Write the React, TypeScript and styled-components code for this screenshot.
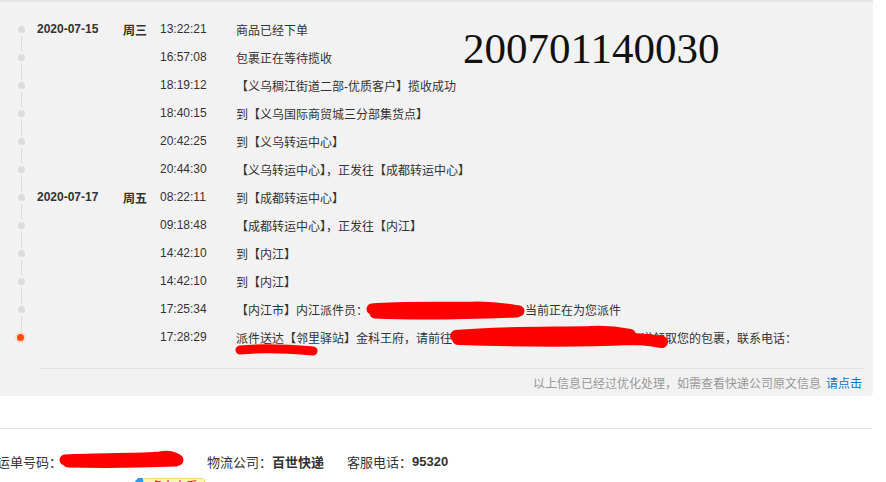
import React from "react"
import styled, { createGlobalStyle } from "styled-components"

const GlobalStyle = createGlobalStyle`
  html, body {
    margin: 0;
    padding: 0;
    background: #fff;
    overflow: hidden;
  }
  body {
    font-family: "Liberation Sans", "Noto Sans CJK SC", sans-serif;
    color: #333;
  }
`

const Page = styled.div`
  position: relative;
  width: 886px;
  height: 482px;
`

const Panel = styled.section`
  width: 873px;
  background: #f2f2f2;
  border-top: 2px solid #e6e6e6;
  border-bottom-right-radius: 4px;
  padding-top: 13px;
  box-sizing: border-box;
`

const Row = styled.div`
  display: grid;
  grid-template-columns: 37px 86px 37px 76px 1fr;
  height: 28px;
  align-items: center;
  font-size: 12px;
  white-space: nowrap;
`

const Gutter = styled.div<{ $first?: boolean; $last?: boolean; $current?: boolean }>`
  position: relative;
  height: 28px;
  &::before {
    content: "";
    position: absolute;
    left: 21px;
    width: 1px;
    top: ${(p) => (p.$first ? "7px" : "0")};
    bottom: ${(p) => (p.$last ? "14px" : "0")};
    background: #dcdcdc;
  }
  &::after {
    content: "";
    position: absolute;
    left: ${(p) => (p.$current ? "17px" : "18px")};
    top: 11px;
    width: 7px;
    height: 7px;
    border-radius: 50%;
    background: ${(p) => (p.$current ? "#ff4a0a" : "#dcdcdc")};
    box-shadow: 0 0 0 ${(p) => (p.$current ? "2px #fcdcd0" : "3px #f2f2f2")};
  }
`

const DateCell = styled.span`
  font-weight: bold;
  color: #333;
`

const WeekCell = styled.span`
  font-weight: bold;
  color: #333;
`

const TimeCell = styled.span`
  color: #333;
`

const TextCell = styled.span`
  color: #333;
`

const Redacted = styled.span<{ $w: number }>`
  position: relative;
  display: inline-block;
  width: ${(p) => p.$w}px;
  height: 12px;
  vertical-align: middle;
`

const Marked = styled.span`
  position: relative;
  display: inline-block;
`

const Ink = styled.svg<{ $l: number; $t: number }>`
  position: absolute;
  left: ${(p) => p.$l}px;
  top: ${(p) => p.$t}px;
  overflow: visible;
`

const Divider = styled.div`
  margin: 17px 10px 0 40px;
  height: 1px;
  background: #e2e2e2;
`

const Note = styled.div`
  height: 27px;
  display: flex;
  align-items: center;
  justify-content: flex-end;
  padding-right: 11px;
  font-size: 12px;
  color: #999;
  gap: 5px;
`

const NoteLink = styled.a`
  color: #0a72c8;
  text-decoration: none;
  font-size: 12px;
`

const Rule = styled.div`
  margin-top: 32px;
  width: 872px;
  height: 1px;
  background: #e4e4e4;
`

const InfoRow = styled.div`
  display: flex;
  align-items: center;
  height: 26px;
  margin: 19px 0 0 -3px;
  font-size: 13px;
  color: #333;
  white-space: nowrap;
`

const InfoItem = styled.span<{ $gap?: number }>`
  margin-left: ${(p) => p.$gap ?? 0}px;
  display: inline-flex;
  align-items: center;
`

const Strong = styled.b`
  font-weight: bold;
`

const Tip = styled.div`
  display: flex;
  align-items: flex-start;
  margin: 4px 0 0 133px;
`

const TipArrow = styled.span`
  width: 0;
  height: 0;
  border-left: 5px solid transparent;
  border-right: 5px solid #2b9bf0;
  border-bottom: 6px solid #2b9bf0;
`

const TipBadge = styled.span`
  background: #fff3b8;
  border: 1px solid #f3d67a;
  border-radius: 3px;
  padding: 0 6px;
  font-size: 12px;
  line-height: 16px;
  color: #d40000;
`

const BigNumber = styled.div`
  position: absolute;
  left: 463px;
  top: 27px;
  font-family: "Liberation Serif", serif;
  font-size: 43px;
  line-height: 1;
  color: #111;
`

type Track = {
  date?: string
  week?: string
  time: string
  text: React.ReactNode
}

const stroke = {
  fill: "none",
  stroke: "#f00",
  strokeLinecap: "round" as const,
  strokeLinejoin: "round" as const,
}

const tracks: Track[] = [
  { date: "2020-07-15", week: "周三", time: "13:22:21", text: "商品已经下单" },
  { time: "16:57:08", text: "包裹正在等待揽收" },
  { time: "18:19:12", text: "【义乌稠江街道二部-优质客户】揽收成功" },
  { time: "18:40:15", text: "到【义乌国际商贸城三分部集货点】" },
  { time: "20:42:25", text: "到【义乌转运中心】" },
  { time: "20:44:30", text: "【义乌转运中心】，正发往【成都转运中心】" },
  { date: "2020-07-17", week: "周五", time: "08:22:11", text: "到【成都转运中心】" },
  { time: "09:18:48", text: "【成都转运中心】，正发往【内江】" },
  { time: "14:42:10", text: "到【内江】" },
  { time: "14:42:10", text: "到【内江】" },
  {
    time: "17:25:34",
    text: (
      <>
        【内江市】内江派件员：
        <Redacted $w={157}>
          <Ink $l={-1} $t={-3} width={160} height={18}>
            <path {...stroke} strokeWidth={11} d="M5 7 C40 4 80 6 110 5 C130 5 145 8 152 9 M8 11 C50 13 100 12 150 10" />
          </Ink>
        </Redacted>
        当前正在为您派件
      </>
    ),
  },
  {
    time: "17:28:29",
    text: (
      <>
        <Marked>
          派件送达
          <Ink $l={-1} $t={16} width={84} height={12}>
            <path {...stroke} strokeWidth={9} d="M5 5 C25 3 55 4 78 6" />
          </Ink>
        </Marked>
        【邻里驿站】金科王府，请前往
        <Redacted $w={189}>
          <Ink $l={-2} $t={-6} width={219} height={22}>
            <path {...stroke} strokeWidth={12} d="M6 9 C50 5 100 6 140 5 C160 4 170 6 180 8 M8 12 C70 14 140 14 180 12 C195 12 205 14 212 15" />
          </Ink>
        </Redacted>
        道领取您的包裹，联系电话：
      </>
    ),
  },
]

const App = () => {
  return (
    <>
      <GlobalStyle />
      <Page>
        <Panel>
          {tracks.map((t, i) => (
            <Row key={i}>
              <Gutter $first={i === 0} $last={i === tracks.length - 1} $current={i === tracks.length - 1} />
              <DateCell>{t.date}</DateCell>
              <WeekCell>{t.week}</WeekCell>
              <TimeCell>{t.time}</TimeCell>
              <TextCell>{t.text}</TextCell>
            </Row>
          ))}
          <Divider />
          <Note>
            以上信息已经过优化处理，如需查看快递公司原文信息
            <NoteLink href="#">请点击</NoteLink>
          </Note>
        </Panel>
        <Rule />
        <InfoRow>
          <InfoItem>
            运单号码：
            <Redacted $w={121}>
              <Ink $l={-2} $t={-4} width={124} height={18}>
                <path {...stroke} strokeWidth={11} d="M5 9 C40 7 80 8 100 6 C110 4 116 7 118 9 M8 11 C50 12 90 11 116 10" />
              </Ink>
            </Redacted>
          </InfoItem>
          <InfoItem $gap={24}>
            物流公司：<Strong>百世快递</Strong>
          </InfoItem>
          <InfoItem $gap={23}>
            客服电话：<Strong>95320</Strong>
          </InfoItem>
        </InfoRow>
        <Tip>
          <TipArrow />
          <TipBadge>点击查看</TipBadge>
        </Tip>
        <BigNumber>200701140030</BigNumber>
      </Page>
    </>
  )
}

export default App
